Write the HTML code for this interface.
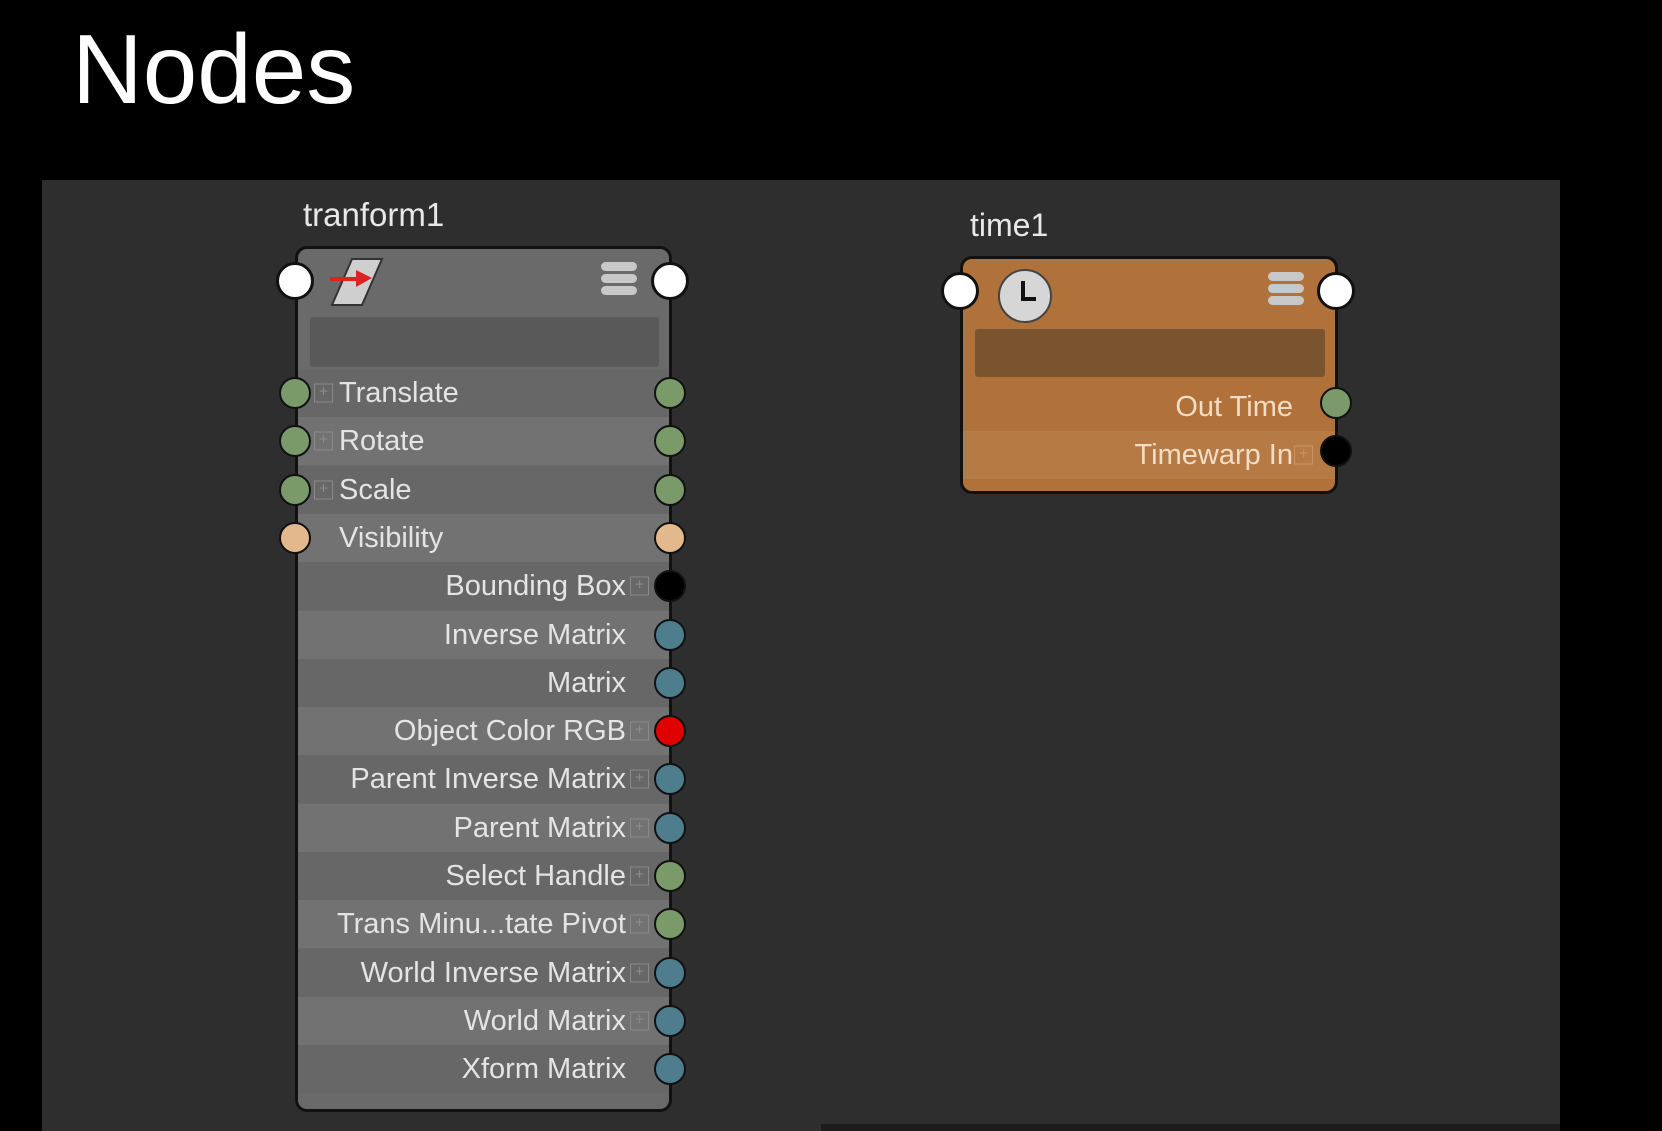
<!DOCTYPE html>
<html><head><meta charset="utf-8"><style>
*{margin:0;padding:0;box-sizing:border-box}
body{width:1662px;height:1131px;background:#000;position:relative;overflow:hidden;font-family:"Liberation Sans",sans-serif}
.a{position:absolute}
.port{position:absolute;width:32px;height:32px;border-radius:50%;border:2.5px solid #111;transform:translate(-50%,-50%)}
.big{width:38px;height:38px;background:#fff;border:3px solid #111}
.row{position:absolute;left:0;right:0;height:48px}
.lbl{position:absolute;font-size:29px;color:#e4e4e4;line-height:48px;white-space:nowrap}
.pl{position:absolute;width:19px;height:19px;border:1px solid #8a8a8a;color:#8a8a8a;font-size:16px;line-height:16px;text-align:center;transform:translateY(-50%)}
.bar{position:absolute;width:36px;height:9px;border-radius:5px;background:#c8c8c8}
</style></head><body>
<div class="a" style="left:72px;top:14px;font-size:98px;color:#fff;line-height:110px">Nodes</div>
<div class="a" style="left:42px;top:180px;width:1518px;height:951px;background:#2e2e2e"></div>
<div class="a" style="left:821px;top:1124px;width:739px;height:7px;background:#1c1c1c"></div>

<div class="a" style="left:303px;top:195px;font-size:33px;color:#e8e8e8;line-height:40px">tranform1</div>
<div class="a" style="left:295px;top:246px;width:377px;height:866px;background:#6a6a6a;border:3px solid #111;border-radius:12px;overflow:hidden">
 <svg class="a" style="left:32px;top:8px" width="60" height="52" viewBox="0 0 60 52"><polygon points="22,2 52,2 32,48 2,48" fill="#cfcfcf" stroke="#333" stroke-width="2"/><path d="M0,22 H30" stroke="#d22" stroke-width="4"/><polygon points="26,13 42,21 26,30" fill="#d22"/></svg>
 <div class="bar" style="left:303px;top:13px"></div><div class="bar" style="left:303px;top:25px"></div><div class="bar" style="left:303px;top:37px"></div>
 <div class="a" style="left:12px;top:68px;width:349px;height:50px;background:#595959;border-radius:3px"></div>
 <div id="rows"></div>
</div>

<div class="a" style="left:970px;top:205px;font-size:32px;color:#e8e8e8;line-height:40px">time1</div>
<div class="a" style="left:960px;top:256px;width:378px;height:238px;background:#b0713a;border:3px solid #111;border-radius:12px;overflow:hidden">
 <div class="a" style="left:35px;top:10px;width:54px;height:54px;border-radius:50%;background:#d6d6d6;border:2px solid #444"></div>
 <svg class="a" style="left:35px;top:10px" width="54" height="54"><path d="M25 12 V30 H38" stroke="#111" stroke-width="4" fill="none"/></svg>
 <div class="bar" style="left:305px;top:13px"></div><div class="bar" style="left:305px;top:25px"></div><div class="bar" style="left:305px;top:37px"></div>
 <div class="a" style="left:12px;top:70px;width:350px;height:48px;background:#7a532f;border-radius:3px"></div>
 <div class="row" style="top:124px;background:#b0713a"><div class="lbl" style="right:42px;color:#f3dcc4">Out Time</div></div>
 <div class="row" style="top:172px;background:#b67a44"><div class="lbl" style="right:42px;color:#f3dcc4">Timewarp In</div><div class="pl" style="right:22px;top:24px;border-color:#c9946a;color:#c9946a">+</div></div>
</div>
<div class="port big" style="left:960px;top:291px"></div>
<div class="port big" style="left:1336px;top:291px"></div>
<div class="port" style="left:1336px;top:403px;background:#7a9a6a"></div>
<div class="port" style="left:1336px;top:451px;background:#000"></div>

<div class="port big" style="left:295px;top:281px"></div>
<div class="port big" style="left:670px;top:281px"></div>
<div id="ports"></div>

<script>
var G='#7a9a6a',B='#4e7d8e',P='#e3b88c',R='#e00000',K='#000';
var rows=[["Translate",1,G,1,1],["Rotate",1,G,1,1],["Scale",1,G,1,1],["Visibility",0,P,1,1],
["Bounding Box",1,K,0,0],["Inverse Matrix",0,B,0,0],["Matrix",0,B,0,0],["Object Color RGB",1,R,0,0],
["Parent Inverse Matrix",1,B,0,0],["Parent Matrix",1,B,0,0],["Select Handle",1,G,0,0],
["Trans Minu...tate Pivot",1,G,0,0],["World Inverse Matrix",1,B,0,0],["World Matrix",1,B,0,0],["Xform Matrix",0,B,0,0]];
var h='',p='';
rows.forEach(function(r,i){
 var top=120+i*48.3; var cy=246+3+top+24;
 h+='<div class="row" style="top:'+top+'px;background:'+(i%2?'#727272':'#676767')+'">';
 if(r[4]){ if(r[1]) h+='<div class="pl" style="left:16px;top:24px">+</div>'; h+='<div class="lbl" style="left:41px">'+r[0]+'</div>'; }
 else { h+='<div class="lbl" style="right:43px">'+r[0]+'</div>'; if(r[1]) h+='<div class="pl" style="right:20px;top:24px">+</div>'; }
 h+='</div>';
 if(r[3]) p+='<div class="port" style="left:295px;top:'+cy+'px;background:'+r[2]+'"></div>';
 p+='<div class="port" style="left:670px;top:'+cy+'px;background:'+r[2]+'"></div>';
});
document.getElementById('rows').innerHTML=h;
document.getElementById('ports').innerHTML=p;
</script>
</body></html>
